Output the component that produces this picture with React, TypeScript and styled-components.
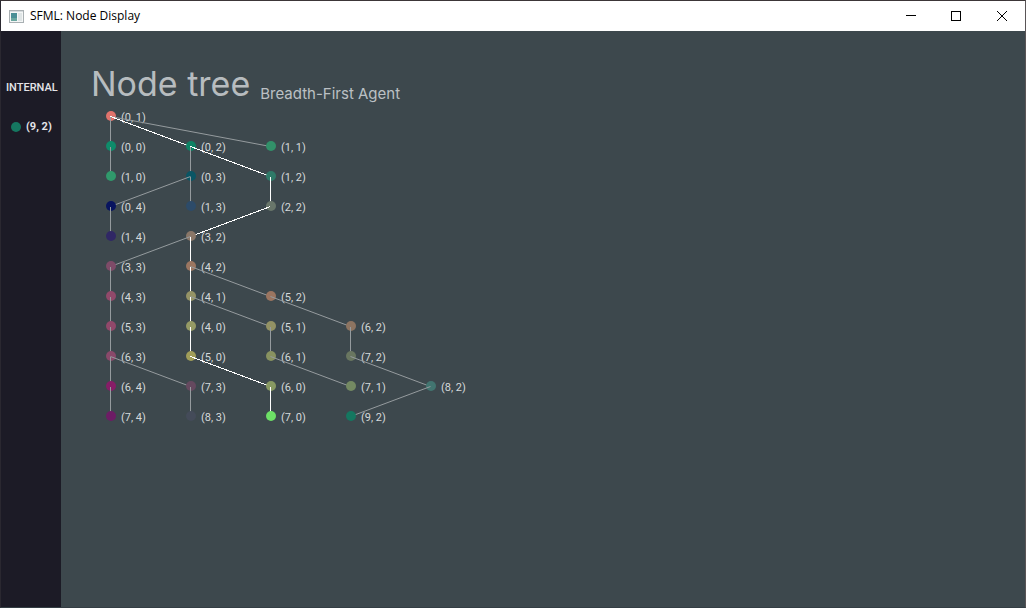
import React from 'react';
import styled, { createGlobalStyle } from 'styled-components';

const GlobalStyle = createGlobalStyle`
  * { box-sizing: border-box; }
  body { margin: 0; background: #3e494e; }
`;

const Window = styled.div`
  display: flex;
  flex-direction: column;
  min-height: 100vh;
  background: #3d484d;
  border: 1px solid #5a5557;
  border-top-color: #3c3638;
  border-left-color: #2a2830;
  border-bottom-color: #343e44;
`;

const TitleBar = styled.header`
  display: flex;
  align-items: center;
  height: 30px;
  padding-left: 8px;
  background: #ffffff;
`;

const AppIcon = styled.svg`
  width: 15px;
  height: 13px;
  margin-right: 6px;
`;

const WindowTitle = styled.span`
  flex: 1;
  font: 12px/16px 'Open Sans', 'Noto Sans', sans-serif;
  color: #000000;
`;

const WindowButton = styled.button`
  display: flex;
  align-items: center;
  justify-content: center;
  width: 46px;
  height: 30px;
  padding: 0;
  border: 0;
  background: transparent;
`;

const Body = styled.div`
  display: flex;
  flex: 1;
`;

const Sidebar = styled.aside`
  flex: none;
  width: 60px;
  padding-top: 49px;
  background: #1c1b26;
  color: #e4e4e8;
  font-family: Roboto, sans-serif;
`;

const SidebarHeading = styled.h2`
  margin: 0 0 23px;
  padding-left: 5px;
  font-size: 11px;
  line-height: 16px;
  font-weight: 500;
`;

const SidebarItem = styled.div`
  display: flex;
  align-items: center;
  gap: 5px;
  padding-left: 10px;
  font-size: 11px;
  line-height: 16px;
  font-weight: 700;
`;

const Dot = styled.span<{ $color: string }>`
  width: 10px;
  height: 10px;
  border-radius: 50%;
  background: ${(p) => p.$color};
`;

const Main = styled.main`
  flex: 1;
  min-width: 0;
  padding: 32px 30px 0;
  font-family: Inter, Roboto, sans-serif;
`;

const Heading = styled.div`
  display: flex;
  align-items: flex-end;
  gap: 10px;
`;

const Title = styled.h1`
  margin: 0;
  font-size: 34px;
  line-height: 42px;
  font-weight: 400;
  color: #b7bcbf;
`;

const Agent = styled.p`
  margin: 0;
  font-size: 15px;
  line-height: 22px;
  color: #bbc0c4;
`;

const Tree = styled.svg`
  display: block;
  width: 400px;
  height: 330px;
`;

const Label = styled.text`
  font: 11px Roboto, sans-serif;
  fill: #d5d9db;
`;

const Edge = styled.line<{ $path: boolean }>`
  stroke: ${(p) => (p.$path ? '#ffffff' : '#959b9e')};
  stroke-width: 1px;
`;

type TreeNode = { id: string; col: number; row: number; color: string };

const nodes: TreeNode[] = [
  { id: '0, 1', col: 0, row: 0, color: '#e0736c' },
  { id: '0, 0', col: 0, row: 1, color: '#0e8c6a' },
  { id: '0, 2', col: 1, row: 1, color: '#0d8264' },
  { id: '1, 1', col: 2, row: 1, color: '#329069' },
  { id: '1, 0', col: 0, row: 2, color: '#30996b' },
  { id: '0, 3', col: 1, row: 2, color: '#0a5564' },
  { id: '1, 2', col: 2, row: 2, color: '#2f7a68' },
  { id: '0, 4', col: 0, row: 3, color: '#08145f' },
  { id: '1, 3', col: 1, row: 3, color: '#2d4b69' },
  { id: '2, 2', col: 2, row: 3, color: '#69766a' },
  { id: '1, 4', col: 0, row: 4, color: '#302765' },
  { id: '3, 2', col: 1, row: 4, color: '#8a7768' },
  { id: '3, 3', col: 0, row: 5, color: '#7e4b68' },
  { id: '4, 2', col: 1, row: 5, color: '#9b7661' },
  { id: '4, 3', col: 0, row: 6, color: '#91496a' },
  { id: '4, 1', col: 1, row: 6, color: '#959366' },
  { id: '5, 2', col: 2, row: 6, color: '#9b7560' },
  { id: '5, 3', col: 0, row: 7, color: '#91486a' },
  { id: '4, 0', col: 1, row: 7, color: '#959a65' },
  { id: '5, 1', col: 2, row: 7, color: '#939264' },
  { id: '6, 2', col: 3, row: 7, color: '#8d7461' },
  { id: '6, 3', col: 0, row: 8, color: '#89496a' },
  { id: '5, 0', col: 1, row: 8, color: '#a09d59' },
  { id: '6, 1', col: 2, row: 8, color: '#889260' },
  { id: '7, 2', col: 3, row: 8, color: '#697660' },
  { id: '6, 4', col: 0, row: 9, color: '#861d67' },
  { id: '7, 3', col: 1, row: 9, color: '#65495f' },
  { id: '6, 0', col: 2, row: 9, color: '#889962' },
  { id: '7, 1', col: 3, row: 9, color: '#748962' },
  { id: '8, 2', col: 4, row: 9, color: '#427570' },
  { id: '7, 4', col: 0, row: 10, color: '#6d1c65' },
  { id: '8, 3', col: 1, row: 10, color: '#444b59' },
  { id: '7, 0', col: 2, row: 10, color: '#6ddf66' },
  { id: '9, 2', col: 3, row: 10, color: '#157760' },
];

const children: Record<string, string[]> = {
  '0, 1': ['0, 0', '1, 1', '0, 2'],
  '0, 0': ['1, 0'],
  '0, 2': ['0, 3', '1, 2'],
  '0, 3': ['0, 4', '1, 3'],
  '1, 2': ['2, 2'],
  '0, 4': ['1, 4'],
  '2, 2': ['3, 2'],
  '3, 2': ['3, 3', '4, 2'],
  '3, 3': ['4, 3'],
  '4, 2': ['5, 2', '4, 1'],
  '4, 3': ['5, 3'],
  '4, 1': ['5, 1', '4, 0'],
  '5, 2': ['6, 2'],
  '5, 3': ['6, 3'],
  '4, 0': ['5, 0'],
  '5, 1': ['6, 1'],
  '6, 2': ['7, 2'],
  '6, 3': ['6, 4', '7, 3'],
  '5, 0': ['6, 0'],
  '6, 1': ['7, 1'],
  '7, 2': ['8, 2'],
  '6, 4': ['7, 4'],
  '7, 3': ['8, 3'],
  '6, 0': ['7, 0'],
  '8, 2': ['9, 2'],
};

const solution = new Set([
  '0, 1', '0, 2', '1, 2', '2, 2', '3, 2', '4, 2', '4, 1', '4, 0', '5, 0', '6, 0', '7, 0',
]);

const byId = new Map(nodes.map((n) => [n.id, n]));
const cx = (n: TreeNode) => 20 + n.col * 80;
const cy = (n: TreeNode) => 11 + n.row * 30;

function NodeTree() {
  return (
    <Tree viewBox="0 0 400 330" role="img" aria-label="Node tree">
      {nodes.map((n) => (
        <g key={n.id}>
          <circle cx={cx(n)} cy={cy(n)} r={5} fill={n.color} />
          <Label x={cx(n) + 10} y={cy(n) + 5}>{`(${n.id})`}</Label>
          {(children[n.id] ?? []).map((id) => {
            const c = byId.get(id)!;
            const onPath = solution.has(n.id) && solution.has(id);
            return (
              <Edge
                key={id}
                $path={onPath}
                shapeRendering={onPath || c.col === n.col ? 'crispEdges' : 'auto'}
                x1={cx(n) - 0.5}
                y1={cy(n) + 0.5}
                x2={cx(c) - 0.5}
                y2={cy(c) + 0.5}
              />
            );
          })}
        </g>
      ))}
    </Tree>
  );
}

export default function App() {
  return (
    <>
      <GlobalStyle />
      <Window>
        <TitleBar>
          <AppIcon viewBox="0 0 15 13" aria-hidden="true">
            <rect x="0.5" y="0.5" width="14" height="12" fill="#f4f6f6" stroke="#a9b0b3" />
            <rect x="1" y="1" width="13" height="1" fill="#d5dadd" />
            <rect x="2" y="3" width="6" height="8" fill="#4a8f96" />
            <rect x="2" y="8" width="6" height="3" fill="#6aa7a0" />
            <rect x="9" y="3" width="4" height="8" fill="#dfe5e6" />
          </AppIcon>
          <WindowTitle>SFML: Node Display</WindowTitle>
          <WindowButton aria-label="Minimize">
            <svg width="12" height="10" viewBox="0 0 12 10">
              <path d="M2 4.5H12" stroke="#000" />
            </svg>
          </WindowButton>
          <WindowButton aria-label="Maximize">
            <svg width="10" height="10" viewBox="0 0 10 10">
              <rect x="0.5" y="0.5" width="9" height="9" fill="none" stroke="#000" />
            </svg>
          </WindowButton>
          <WindowButton aria-label="Close">
            <svg width="10" height="10" viewBox="0 0 10 10">
              <path d="M0 0L10 10M10 0L0 10" stroke="#000" />
            </svg>
          </WindowButton>
        </TitleBar>
        <Body>
          <Sidebar>
            <SidebarHeading>INTERNAL</SidebarHeading>
            <SidebarItem>
              <Dot $color="#157760" />
              <span>(9, 2)</span>
            </SidebarItem>
          </Sidebar>
          <Main>
            <Heading>
              <Title>Node tree</Title>
              <Agent>Breadth-First Agent</Agent>
            </Heading>
            <NodeTree />
          </Main>
        </Body>
      </Window>
    </>
  );
}
